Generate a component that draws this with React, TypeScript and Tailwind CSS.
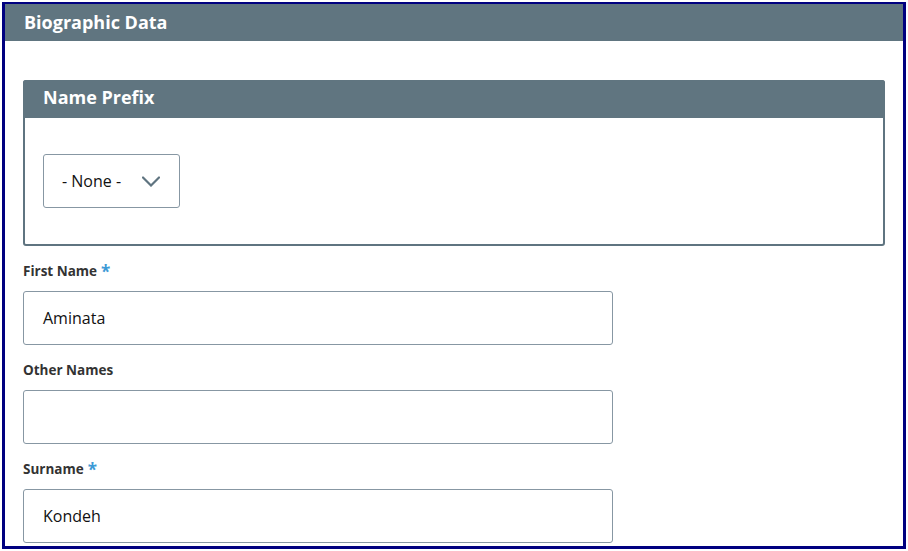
const font = { fontFamily: '"Open Sans", "Liberation Sans", sans-serif' };

interface FieldProps {
  label: string;
  value: string;
  required?: boolean;
}

function TextField({ label, value, required = false }: FieldProps) {
  return (
    <div className="mt-[17px]">
      <label className="-mt-px flex h-5 items-center gap-1 pb-px text-[13.5px] font-bold text-[#333]">
        {label}
        {required && <span className="text-[17px] leading-none text-[#3d9ad6]">*</span>}
      </label>
      <div className="mt-[9px] flex h-[54px] w-[590px] items-center rounded-[3px] border border-[#8797a3] bg-white pl-[19px] text-base text-[#111]">
        {value}
      </div>
    </div>
  );
}

function Chevron() {
  return (
    <svg width="18" height="11" viewBox="0 0 18 11" fill="none">
      <path d="M1 1.5 L9 9.5 L17 1.5" stroke="#5f7480" strokeWidth="2.2" strokeLinecap="round" />
    </svg>
  );
}

export default function App() {
  return (
    <div className="h-[551px] w-[908px] bg-white p-[2px]" style={font}>
      <div className="h-[547px] w-[904px] overflow-hidden border-[3px] border-t-2 border-[#000080] bg-white">
        <div className="flex h-[37px] items-center bg-[#607580] pl-[19px] text-[18px] font-bold text-white">
          Biographic Data
        </div>

        <div className="px-[18px] pt-[39px]">
          <section className="rounded-[3px] border-2 border-[#5f7480]">
            <div className="-mx-[2px] -mt-[2px] flex h-[38px] items-center rounded-t-[3px] bg-[#607580] pb-[3px] pl-[20px] text-[18px] font-bold text-white">
              Name Prefix
            </div>
            <div className="px-[18px] py-[36px]">
              <div className="flex h-[54px] w-[137px] items-center justify-between rounded-[3px] border border-[#8797a3] bg-white pl-[18px] pr-[19px] text-base text-[#111]">
                <span>- None -</span>
                <Chevron />
              </div>
            </div>
          </section>

          <TextField label="First Name" value="Aminata" required />
          <TextField label="Other Names" value="" />
          <TextField label="Surname" value="Kondeh" required />
        </div>
      </div>
    </div>
  );
}
